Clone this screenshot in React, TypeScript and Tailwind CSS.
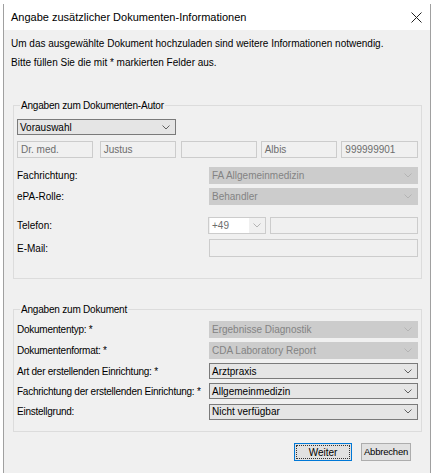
import React from "react";

const font = { fontFamily: '"Liberation Sans", Arial, sans-serif' };

function Chevron({ light }: { light?: boolean }) {
  return (
    <svg width="8" height="5" viewBox="0 0 8 5" className="shrink-0">
      <polyline
        points="0.5,0.5 4,4 7.5,0.5"
        fill="none"
        stroke={light ? "#b4b4b4" : "#606060"}
        strokeWidth="1"
      />
    </svg>
  );
}

function DisabledCombo({ value }: { value: string }) {
  return (
    <div className="flex h-[17px] w-[209px] shrink-0 items-center justify-between bg-[#cccccc] pl-[3px] pr-[6px] text-[#838383]">
      <span>{value}</span>
      <Chevron light />
    </div>
  );
}

function Combo({ value, width = "w-[209px]" }: { value: string; width?: string }) {
  return (
    <div className={`flex h-[16px] ${width} shrink-0 items-center justify-between border border-[#7a7a7a] bg-[#e5e5e5] pl-[2px] pr-[5px] text-black`}>
      <span>{value}</span>
      <Chevron />
    </div>
  );
}

function TextBox({ value, width }: { value?: string; width: string }) {
  return (
    <div className={`flex h-[17px] ${width} items-center border border-[#cccccc] bg-[#f0f0f0] pl-[3px] text-[#6d6d6d]`}>
      {value}
    </div>
  );
}

function Row({ label, children, h = "h-[21px]" }: { label: string; children: React.ReactNode; h?: string }) {
  return (
    <div className={`flex ${h} items-center justify-between`}>
      <span className="whitespace-nowrap tracking-[-0.25px] text-black">{label}</span>
      {children}
    </div>
  );
}

export default function App() {
  return (
    <div className="h-[473px] w-[437px] overflow-hidden bg-white pl-[3px] pt-[4px] text-[10px]" style={font}>
      <div className="flex h-[469px] w-[428px] flex-col border-x border-[#a0a0a0] bg-[#f0f0f0]">
        {/* Title bar */}
        <div className="flex h-[26px] items-center justify-between bg-white pl-[7px] pr-[8px]">
          <span className="text-[11px] text-black">Angabe zusätzlicher Dokumenten-Informationen</span>
          <svg width="11" height="11" viewBox="0 0 11 11">
            <path d="M0.5 0.5 L10.5 10.5 M10.5 0.5 L0.5 10.5" stroke="#222" strokeWidth="1" />
          </svg>
        </div>

        {/* Body */}
        <div className="flex flex-col px-[9px]">
          <p className="-mx-[2px] mt-[7px] h-[14px] leading-[14px] text-black">
            Um das ausgewählte Dokument hochzuladen sind weitere Informationen notwendig.
          </p>
          <p className="-mx-[2px] mt-[5px] h-[14px] leading-[14px] text-black">
            Bitte füllen Sie die mit * markierten Felder aus.
          </p>

          {/* Group: Autor */}
          <div className="relative mt-[35px] h-[174px] w-[409px] border border-[#dcdcdc] px-[3px]">
            <span className="absolute -top-[7px] left-[6px] bg-[#f0f0f0] px-px leading-[13px] tracking-[-0.2px] text-black">
              Angaben zum Dokumenten-Autor
            </span>
            <div className="mt-[13px]">
              <Combo value="Vorauswahl" width="w-[159px]" />
            </div>
            <div className="mt-[6px] flex gap-[4px]">
              <TextBox value="Dr. med." width="w-[76px]" />
              <div className="ml-[3px]">
                <TextBox value="Justus" width="w-[76px]" />
              </div>
              <div className="ml-px">
                <TextBox width="w-[76px]" />
              </div>
              <TextBox value="Albis" width="w-[77px]" />
              <TextBox value="999999901" width="w-[77px]" />
            </div>
            <div className="mt-[9px] flex h-[17px] items-center justify-between">
              <span className="text-black">Fachrichtung:</span>
              <DisabledCombo value="FA Allgemeinmedizin" />
            </div>
            <div className="mt-[4px] flex h-[17px] items-center justify-between">
              <span className="text-black">ePA-Rolle:</span>
              <DisabledCombo value="Behandler" />
            </div>
            <div className="mt-[12px] flex h-[17px] items-center justify-between">
              <span className="text-black">Telefon:</span>
              <div className="flex gap-[4px]">
                <div className="flex h-[17px] w-[58px] items-center border border-[#cccccc] bg-[#f0f0f0]">
                  <div className="ml-px flex h-[15px] w-[39px] items-center bg-white pl-[2px] text-[#6d6d6d]">+49</div>
                  <div className="flex flex-1 justify-center">
                    <Chevron light />
                  </div>
                </div>
                <TextBox width="w-[148px]" />
              </div>
            </div>
            <div className="mt-[5px] flex h-[18px] items-center justify-between">
              <span className="text-black">E-Mail:</span>
              <div className="h-[18px] w-[209px] border border-[#cccccc] bg-[#f0f0f0]" />
            </div>
          </div>

          {/* Group: Dokument */}
          <div className="relative mt-[30px] h-[123px] w-[409px] border border-[#dcdcdc] px-[3px] pt-[9px]">
            <span className="absolute -top-[7px] left-[6px] bg-[#f0f0f0] px-px leading-[13px] tracking-[-0.2px] text-black">
              Angaben zum Dokument
            </span>
            <Row label="Dokumententyp: *">
              <DisabledCombo value="Ergebnisse Diagnostik" />
            </Row>
            <Row label="Dokumentenformat: *">
              <DisabledCombo value="CDA Laboratory Report" />
            </Row>
            <Row label="Art der erstellenden Einrichtung: *" h="h-[20px]">
              <Combo value="Arztpraxis" />
            </Row>
            <Row label="Fachrichtung der erstellenden Einrichtung: *" h="h-[20px]">
              <Combo value="Allgemeinmedizin" />
            </Row>
            <Row label="Einstellgrund:" h="h-[21px]">
              <Combo value="Nicht verfügbar" />
            </Row>
          </div>

          {/* Buttons */}
          <div className="mt-[11px] flex justify-end gap-[9px] pr-[10px]">
            <button className="flex h-[18px] w-[58px] items-center justify-center border border-[#0078d7] bg-[#e1e1e1] p-px text-black">
              <span className="flex h-full w-full items-center justify-center border border-dotted border-[#333]">Weiter</span>
            </button>
            <button className="flex h-[18px] w-[50px] items-center justify-center whitespace-nowrap border border-[#adadad] bg-[#e1e1e1] p-0 text-[9.5px] tracking-[-0.2px] text-black">
              Abbrechen
            </button>
          </div>
        </div>
      </div>
    </div>
  );
}
